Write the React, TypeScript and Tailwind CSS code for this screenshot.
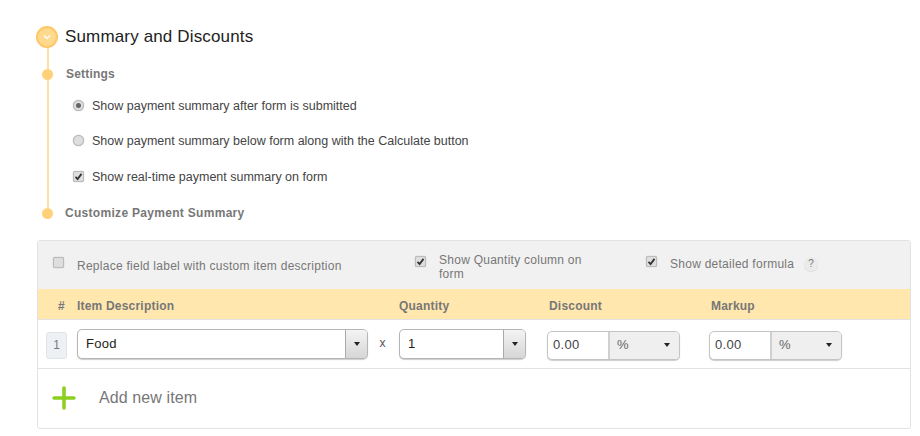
import { Plus } from "lucide-react";

function Bullet() {
  return <span className="block h-[11px] w-[11px] rounded-full bg-[#ffd27a]" />;
}

function Radio({ checked }: { checked?: boolean }) {
  return (
    <span className="-mt-[1px] flex h-[11px] w-[11px] items-center justify-center rounded-full border border-[#bbb] bg-[#dedede] shadow-[0_0_1px_#999]">
      {checked && <span className="h-[5px] w-[5px] rounded-full bg-[#666]" />}
    </span>
  );
}

function Check({ checked }: { checked?: boolean }) {
  return (
    <span className="-mt-[1px] flex h-[11px] w-[11px] items-center justify-center rounded-[2px] border border-[#bbb] bg-[#dedede] shadow-[0_0_1px_#999]">
      {checked && (
        <svg viewBox="0 0 12 12" className="h-[9px] w-[9px]">
          <path d="M2 6.5 L4.8 9.5 L10 2.5" fill="none" stroke="#333" strokeWidth="2.4" />
        </svg>
      )}
    </span>
  );
}

function Caret() {
  return <span className="h-0 w-0 border-x-[3px] border-t-[4px] border-x-transparent border-t-[#222]" />;
}

function ComboBox({ value, width }: { value: string; width: string }) {
  return (
    <div className={`-mt-[1px] flex h-[30px] ${width} overflow-hidden rounded-[5px] border border-[#b5b5b5] bg-white shadow-[0_1px_1px_#ccc]`}>
      <span className="flex-1 pl-2 pt-[6px] text-[13px] leading-4 tracking-[0.3px] text-[#222]">{value}</span>
      <span className="flex w-[22px] items-center justify-center border-l border-[#aaa] bg-gradient-to-b from-[#f4f4f4] to-[#d6d6d6]">
        <Caret />
      </span>
    </div>
  );
}

function AmountBox() {
  return (
    <div className="mt-[2px] flex h-[29px] w-[133px] overflow-hidden rounded-[5px] border border-[#c4c4c4] bg-white shadow-[0_1px_1px_#ccc]">
      <span className="flex w-[60px] items-center pl-[5px] text-[13px] tracking-[0.3px] text-[#444]">0.00</span>
      <span className="flex flex-1 items-center justify-between border-l-2 border-[#d0d0d0] bg-[#efefef] pl-[7px] pr-[9px] text-[13px] text-[#666]">
        %
        <Caret />
      </span>
    </div>
  );
}

export default function App() {
  return (
    <div className="h-[436px] w-[920px] overflow-hidden bg-white font-['Liberation_Sans',Arial,sans-serif]">
      <div className="relative h-[240px] pl-[36px] pt-[26px]">
        <span className="absolute bottom-[27px] left-[47px] top-[40px] w-[2px] bg-[#ffdf9f]" />

        <div className="relative flex h-[22px] items-center gap-[7px]">
          <span className="flex h-[22px] w-[22px] items-center justify-center rounded-full border-2 border-[#ffc766] bg-[#ffd98e]">
            <svg viewBox="0 0 10 10" className="h-[10px] w-[10px]">
              <path d="M2 3.5 L5 6.5 L8 3.5" fill="none" stroke="#fff" strokeWidth="1.4" />
            </svg>
          </span>
          <h1 className="text-[17px] font-normal leading-5 tracking-[0.15px] text-[#222]">Summary and Discounts</h1>
        </div>

        <div className="relative mt-[18px] flex h-4 items-center pl-[6px]">
          <Bullet />
          <span className="ml-[13px] text-[12px] font-bold tracking-[0.2px] text-[#777]">Settings</span>
        </div>

        <div className="mt-[16px] flex flex-col gap-[19px] pl-[37px] text-[12.5px] leading-4 text-[#444]">
          <label className="flex h-4 items-center gap-2">
            <Radio checked />
            Show payment summary after form is submitted
          </label>
          <label className="flex h-4 items-center gap-2">
            <Radio />
            Show payment summary below form along with the Calculate button
          </label>
          <label className="mt-[1px] flex h-4 items-center gap-2">
            <Check checked />
            Show real-time payment summary on form
          </label>
        </div>

        <div className="relative mt-[20px] flex h-4 items-center pl-[6px]">
          <Bullet />
          <span className="ml-[12px] text-[12px] font-bold tracking-[0.3px] text-[#777]">Customize Payment Summary</span>
        </div>
      </div>

      <div className="ml-[37px] h-[189px] w-[874px] overflow-hidden rounded-[3px] border border-[#e2e2e2] bg-white">
        <div className="flex h-[48px] bg-[#f1f1f1] text-[12px] leading-[14px] tracking-[0.26px] text-[#777]">
          <div className="flex w-[377px] pl-[15px] pt-[17px]">
            <Check />
            <span className="ml-[13px] pt-[1px]">Replace field label with custom item description</span>
          </div>
          <div className="flex w-[231px] pt-[16px]">
            <Check checked />
            <span className="-mt-[4px] ml-[13px] w-[150px]">Show Quantity column on form</span>
          </div>
          <div className="flex items-start pt-[16px]">
            <Check checked />
            <span className="ml-[13px]">Show detailed formula</span>
            <span className="ml-[10px] flex h-[14px] w-[14px] items-center justify-center rounded-full bg-[#ebebeb] text-[10px] shadow-[0_1px_1px_#ddd]">?</span>
          </div>
        </div>

        <div className="flex h-[31px] items-center border-b border-[#e2e2e2] bg-[#ffe7ae] pt-[3px] text-[12px] font-bold tracking-[0.2px] text-[#777]">
          <span className="ml-[20px] w-[19px]">#</span>
          <span className="w-[322px]">Item Description</span>
          <span className="w-[150px]">Quantity</span>
          <span className="w-[162px]">Discount</span>
          <span>Markup</span>
        </div>

        <div className="flex h-[49px] items-center border-b border-[#e2e2e2]">
          <span className="ml-[8px] mt-[2px] flex h-[27px] w-[21px] items-center justify-center rounded-[3px] border border-[#e0e4e8] bg-[#eef1f4] text-[12px] text-[#778]">1</span>
          <div className="ml-[10px]">
            <ComboBox value="Food" width="w-[291px]" />
          </div>
          <span className="-mt-[3px] w-[31px] -translate-x-px text-center text-[12px] text-[#555]">x</span>
          <ComboBox value="1" width="w-[127px]" />
          <div className="ml-[21px]">
            <AmountBox />
          </div>
          <div className="ml-[29px]">
            <AmountBox />
          </div>
        </div>

        <div className="flex h-[58px] items-center pl-[9px]">
          <Plus className="h-[34px] w-[34px] text-[#8ccf1e]" strokeWidth={2.5} />
          <span className="ml-[18px] text-[16px] tracking-[0.1px] text-[#777]">Add new item</span>
        </div>
      </div>
    </div>
  );
}
